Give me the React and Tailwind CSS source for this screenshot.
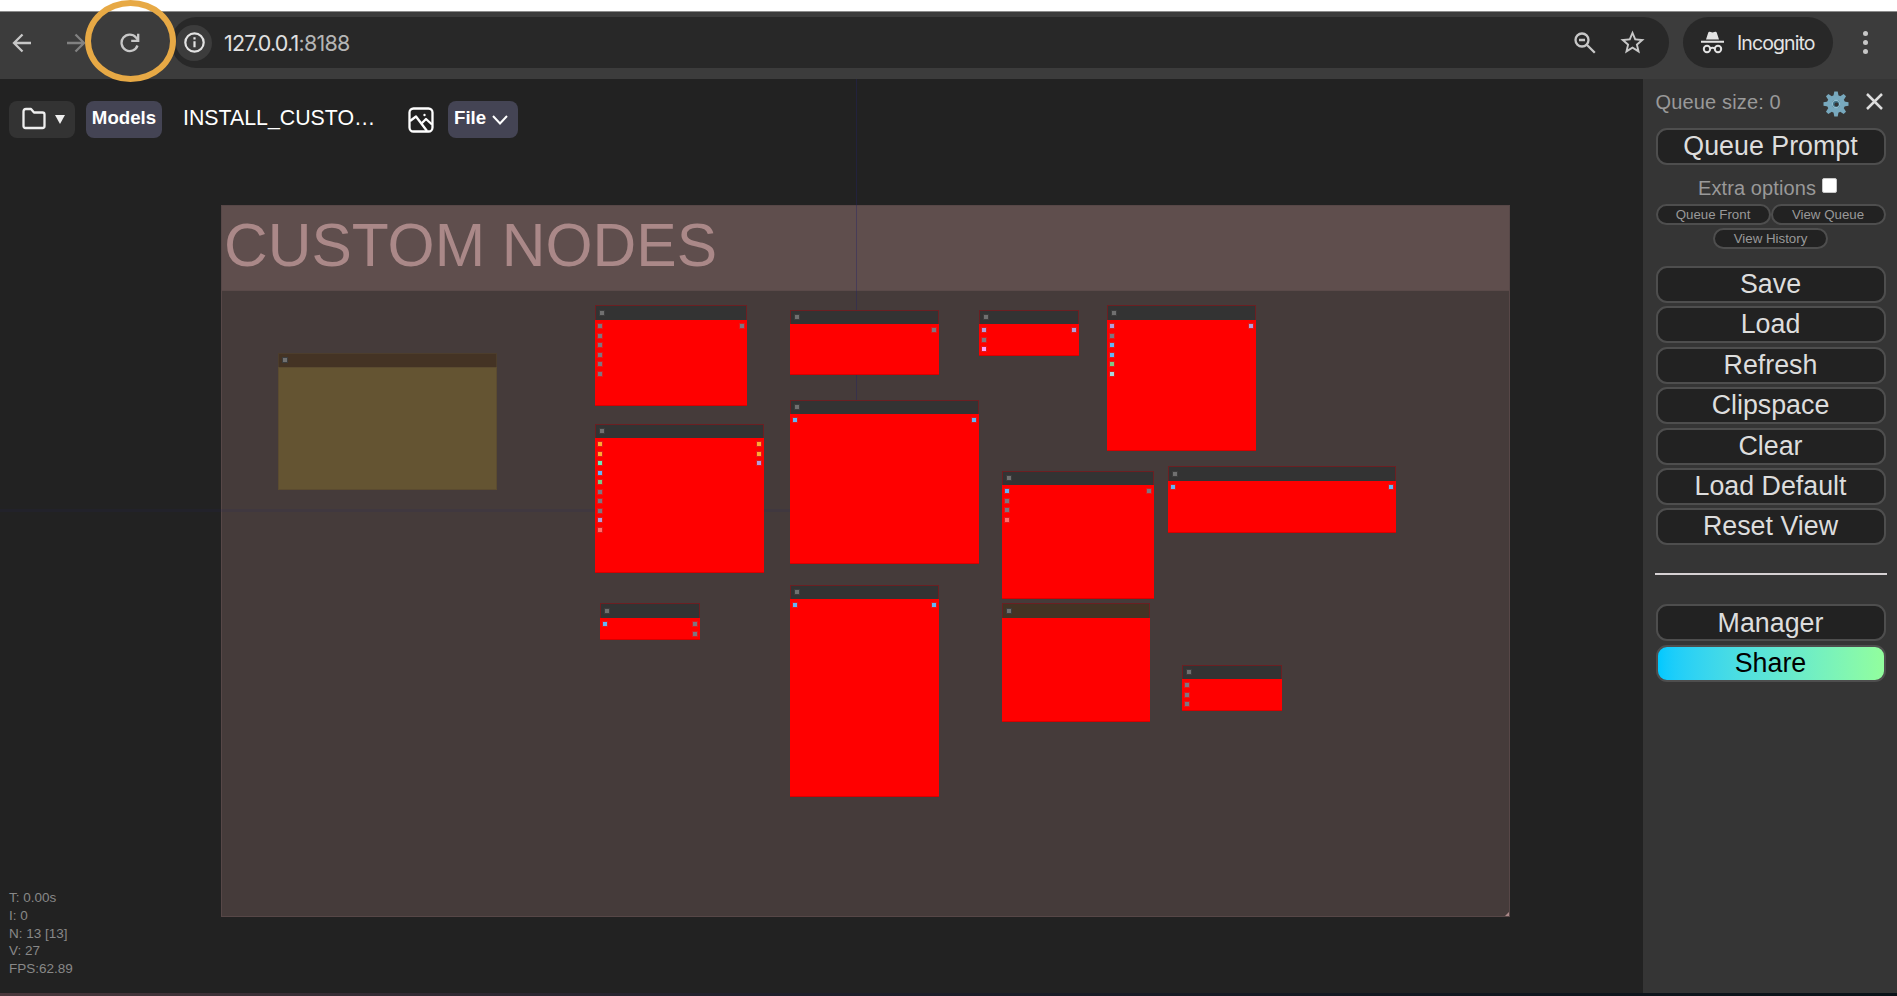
import { MdStarOutline } from "react-icons/md";

const GREY = "#7f7580";
const BLUE = "#64b5f6";
const ORANGE = "#ffa931";
const VIOLET = "#b39ddb";
const GREEN = "#81c784";
const MINT = "#6ee7b7";
const ROSE = "#ff6e6e";

// x, right edge, title top, body top, bottom (window coordinates)
const nodes = [
  { x: 278, r: 497, t: 353, b: 367, e: 490, kind: "note" },
  { x: 595, r: 747, t: 305, b: 320, e: 406, ins: [GREY, GREY, GREY, GREY, GREY, GREY], outs: [GREY] },
  { x: 595, r: 764, t: 424, b: 438, e: 573, ins: [ORANGE, ORANGE, MINT, BLUE, GREEN, GREY, GREY, GREY, VIOLET, ROSE], outs: [ORANGE, ORANGE, VIOLET] },
  { x: 600, r: 700, t: 603, b: 618, e: 640, ins: [BLUE], outs: [GREY, GREY] },
  { x: 790, r: 939, t: 310, b: 324, e: 375, outs: [GREY] },
  { x: 790, r: 979, t: 400, b: 414, e: 564, ins: [BLUE], outs: [BLUE] },
  { x: 790, r: 939, t: 585, b: 599, e: 797, ins: [BLUE], outs: [BLUE] },
  { x: 979, r: 1079, t: 310, b: 324, e: 356, ins: [VIOLET, GREY, "#ff9cf9"], outs: [VIOLET] },
  { x: 1107, r: 1256, t: 305, b: 320, e: 451, ins: [VIOLET, GREY, BLUE, BLUE, GREEN, "#a8dadc"], outs: [VIOLET] },
  { x: 1002, r: 1154, t: 471, b: 485, e: 599, ins: [BLUE, GREY, GREY, ROSE], outs: [GREY] },
  { x: 1168, r: 1396, t: 466, b: 481, e: 533, ins: [BLUE], outs: [BLUE] },
  { x: 1002, r: 1150, t: 603, b: 618, e: 722, kind: "brown" },
  { x: 1182, r: 1282, t: 665, b: 679, e: 711, ins: [GREY, GREY, GREY] },
];

const Slots = ({ colors = [] }) => (
  <div className="relative w-1">
    {colors.map((c, i) => (
      <span
        key={i}
        className="absolute left-0 size-1 outline outline-[#c83030]/60"
        style={{ top: Math.round(i * 9.5), background: c }}
      />
    ))}
  </div>
);

const Node = ({ n }) => {
  const note = n.kind === "note";
  const title = n.kind ? "bg-[#443324]" : "bg-[#333333]";
  const edge = note ? "border-[#4c3d2c]" : "border-[#6b1f22]";
  return (
    <div
      className="absolute flex flex-col"
      style={{ left: n.x, top: n.t - 79, width: n.r - n.x, height: n.e - n.t }}
    >
      <div className={`flex shrink-0 items-center border border-b-0 pb-px pl-1 ${title} ${edge}`} style={{ height: n.b - n.t }}>
        <span className="size-1 bg-[#707070] outline outline-[#3c3c3c]" />
      </div>
      <div
        className={`flex flex-1 justify-between px-[3px] pt-1 ${note ? "border border-[#5b4b30] bg-[#645432]" : "border-b border-[#d80000] bg-[#ff0000]"}`}
      >
        <Slots colors={n.ins} />
        <Slots colors={n.outs} />
      </div>
    </div>
  );
};

const MenuButton = ({ children, className = "" }) => (
  <button className={`flex h-[37px] w-[230px] shrink-0 items-center justify-center rounded-[11px] border-2 border-[#4e4e4e] bg-[#222222] text-[26.8px] leading-none text-[#dddddd] ${className}`}>
    {children}
  </button>
);

const SmallButton = ({ children }) => (
  <button className="flex h-[21px] w-[115px] items-center justify-center rounded-full border-2 border-[#4e4e4e] bg-[#222222] text-[13.3px] leading-none text-[#999999]">
    {children}
  </button>
);

const BrowserBar = () => (
  <header className="relative flex h-[68px] shrink-0 items-start border-t border-[#8c8c8c] bg-[#3c3c3c] pt-[5px]">
    <div className="flex h-[51px] w-[171px] shrink-0 items-center">
      <svg className="ml-3 size-5" viewBox="0 0 20 20" fill="none" stroke="#c7c7c7" strokeWidth="2.3">
        <path d="M19 10H2.5M10.5 1.5 2 10l8.500 8.500" />
      </svg>
      <svg className="ml-[34px] size-5" viewBox="0 0 20 20" fill="none" stroke="#818181" strokeWidth="2.3">
        <path d="M1 10h16.500M9.500 1.500 18 10l-8.500 8.500" />
      </svg>
      <svg className="ml-[34px] size-5" viewBox="0 0 20 20" fill="none" stroke="#c7c7c7" strokeWidth="2.300">
        <path d="M17.500 12.500A8.200 8.200 0 1 1 16 4.500L18 7" />
        <path d="M18.200 .8v7h-7" />
      </svg>
    </div>
    <div className="flex h-[51px] w-[1498px] shrink-0 items-center rounded-full bg-[#282828] pr-[22px] pl-[5px]">
      <span className="flex size-9 items-center justify-center rounded-full bg-[#3c3c3c]">
        <svg className="size-[21px]" viewBox="0 0 21 21" fill="none" stroke="#e3e3e3" strokeWidth="2.200">
          <circle cx="10.500" cy="10.500" r="9.200" />
          <path d="M10.500 9.300v6M10.500 5.300v2.200" />
        </svg>
      </span>
      <span className="ml-[12px] pt-[2px] font-[Inter,sans-serif] text-[21.500px] tracking-[-0.8px] text-[#e0e0e0]">
        127.0.0.1<span className="text-[#b5b5b5]">:8188</span>
      </span>
      <svg className="ml-auto size-[22px]" viewBox="0 0 22 22" fill="none" stroke="#c7c7c7" strokeWidth="2.300">
        <circle cx="8" cy="8" r="6.500" />
        <path d="m12.800 12.800 8 8M5 8h6" />
      </svg>
      <MdStarOutline className="ml-[22px] size-[29px] text-[#c7c7c7]" />
    </div>
    <div className="ml-[14px] flex h-[51px] w-[150px] shrink-0 items-center rounded-full bg-[#282828] pl-[18px]">
      <svg className="size-[23px]" viewBox="0 0 23 23" fill="#e3e3e3">
        <path d="M5 8.500 7.300 1.500Q7.700.4 8.800.7L11.500 1.500 14.200.7Q15.300.4 15.700 1.500L18 8.500ZM0 9.700h23v2.100H0Z" />
        <g fill="none" stroke="#e3e3e3" strokeWidth="2">
          <circle cx="6" cy="18" r="3.200" />
          <circle cx="17" cy="18" r="3.200" />
          <path d="M9 17.500q2.500-1.300 5 0" />
        </g>
      </svg>
      <span className="ml-[13px] pt-[2px] font-[Inter,sans-serif] text-[19.500px] tracking-[-0.9px] text-[#e3e3e3]">Incognito</span>
    </div>
    <div className="ml-[30px] flex h-[51px] flex-col items-center justify-center gap-1">
      <span className="size-[5px] rounded-full bg-[#c7c7c7]" />
      <span className="size-[5px] rounded-full bg-[#c7c7c7]" />
      <span className="size-[5px] rounded-full bg-[#c7c7c7]" />
    </div>
    <div className="absolute -top-[12px] left-[85px] z-10 h-[82px] w-[91px] rounded-[50%] border-[6.500px] border-[#e7a945]" />
  </header>
);

const Toolbar = () => (
  <div className="relative z-10 flex items-start pt-[22px] pl-[9px] text-white">
    <div className="flex h-[37px] w-[66px] items-center rounded-lg bg-[#333333] pb-px pl-[13px]">
      <svg className="size-6" viewBox="0 0 24 24" fill="none" stroke="#eeeeee" strokeWidth="2.300" strokeLinejoin="round">
        <path d="M1.500 4.500Q1.500 2 4 2H9L12 5.500H20.500Q22.500 5.500 22.500 7.500V19Q22.500 21 20.500 21H3.500Q1.500 21 1.500 19Z" />
      </svg>
      <svg className="ml-[9px] h-[9px] w-[10px]" viewBox="0 0 10 9" fill="#eeeeee"><path d="M0 0h10L5 9z" /></svg>
    </div>
    <div className="ml-[11px] flex h-[37px] w-[76px] items-center justify-center rounded-lg bg-[#444454] pb-[4px] text-[18.670px] font-bold">Models</div>
    <div className="ml-[21px] flex h-[37px] w-[197px] items-center pb-px text-[21.330px] whitespace-nowrap">INSTALL_CUSTO…</div>
    <svg className="mt-[6px] ml-[28px] size-[26px]" viewBox="0 0 26 26" fill="none" stroke="#fff" strokeWidth="2.300" strokeLinejoin="round">
      <rect x="1.500" y="1.500" width="23" height="23" rx="4" />
      <path d="m2 14 6-4.500 11 14.500M13 17l5-5 6 5.500" />
      <circle cx="16.500" cy="8" r="1.200" fill="#fff" stroke="none" />
    </svg>
    <div className="ml-[14px] flex h-[37px] w-[70px] items-center rounded-lg bg-[#444454] pb-[4px] pl-[6px] text-[18.670px] font-bold">
      File
      <svg className="mt-1 ml-[6px] h-[10px] w-4" viewBox="0 0 16 10" fill="none" stroke="#fff" strokeWidth="2"><path d="m1 1 7 7.500L15 1" /></svg>
    </div>
  </div>
);

const Canvas = () => (
  <main className="relative flex flex-1 flex-col overflow-hidden bg-[#222222]">
    <div className="absolute top-[126px] left-[221px] h-[712px] w-[1289px] border border-[#574747] bg-[#453b3a]">
      <div className="h-[85px] border-b border-[#5a4a49] bg-[#5f4e4d] pt-[5px] pl-[2px]">
        <h1 className="text-[60.500px] leading-[68px] whitespace-nowrap text-[#aa8888]">CUSTOM NODES</h1>
      </div>
      <svg className="absolute right-0 bottom-0 size-1" viewBox="0 0 4 4"><path d="M4 0v4H0z" fill="#aa8888" /></svg>
    </div>
    <div className="absolute top-0 left-[856px] h-[432px] w-px bg-[#222266]/40" />
    <div className="absolute top-[430px] left-0 h-[3px] w-[856px] bg-[#282860]/15" />
    {nodes.map((n, i) => <Node key={i} n={n} />)}
    <Toolbar />
    <div className="mt-auto mb-[15px] flex flex-col pl-[9px] text-[13.500px] leading-[17.800px] text-[#888888]">
      <span>T: 0.00s</span>
      <span>I: 0</span>
      <span>N: 13 [13]</span>
      <span>V: 27</span>
      <span>FPS:62.89</span>
    </div>
  </main>
);

const SideMenu = () => (
  <aside className="flex w-[254px] shrink-0 flex-col items-center bg-[#353535] pl-px text-[#999999]">
    <div className="flex h-[49px] w-[230px] shrink-0 items-start pt-[11px] text-[20px] leading-6">
      <span className="tracking-[0.15px]">Queue size: 0</span>
      <svg className="mt-px ml-auto size-[26px]" viewBox="-13 -13 26 26">
        <g fill="#78a9be">
          {[0, 45, 90, 135, 180, 225, 270, 315].map((a) => (
            <path key={a} transform={`rotate(${a})`} d="M-2.600-8-1.700-12.500h3.400L2.600-8z" />
          ))}
        </g>
        <circle r="6.500" fill="none" stroke="#78a9be" strokeWidth="5" />
        <circle r="4.200" fill="#8fbfd1" />
        <circle r="3" fill="#3f6f82" />
        <circle cx=".5" cy=".5" r="2" fill="#353535" />
      </svg>
      <svg className="mt-[3px] mr-[3px] ml-[17px] size-[17px]" viewBox="0 0 17 17" fill="none" stroke="#dddddd" strokeWidth="2.500"><path d="m1 1 15 15M16 1 1 16" /></svg>
    </div>
    <MenuButton>Queue Prompt</MenuButton>
    <label className="mt-[11px] flex h-[25px] items-start gap-[6px] text-[20px] leading-[24px]">
      <span className="-ml-[6px] tracking-[0.1px]">Extra options</span>
      <span className="mt-[2px] size-[15px] rounded-[2px] border border-[#c8c8c8] bg-white" />
    </label>
    <div className="mt-[3px] flex">
      <SmallButton>Queue Front</SmallButton>
      <SmallButton>View Queue</SmallButton>
    </div>
    <div className="mt-[3px] flex">
      <SmallButton>View History</SmallButton>
    </div>
    <div className="mt-[17px] flex flex-col gap-[3.400px]">
      {["Save", "Load", "Refresh", "Clipspace", "Clear", "Load Default", "Reset View"].map((l) => (
        <MenuButton key={l}>{l}</MenuButton>
      ))}
    </div>
    <hr className="mt-[28px] mb-[29px] h-[2px] w-[232px] border-0 bg-[#d6d1d3]" />
    <div className="flex flex-col gap-[4px]">
      <MenuButton className="pt-px">Manager</MenuButton>
      <MenuButton className="bg-linear-to-r from-[#00c9ff] to-[#92fe9d] !text-black">Share</MenuButton>
    </div>
  </aside>
);

export default function App() {
  return (
    <div className="flex h-[996px] w-[1897px] flex-col overflow-hidden bg-white pt-[11px] font-['Liberation_Sans',Arial,sans-serif]">
      <BrowserBar />
      <div className="flex min-h-0 flex-1">
        <Canvas />
        <SideMenu />
      </div>
      <div className="h-[3px] shrink-0 bg-linear-to-r from-[#4a383c] via-[#20202c] via-40% to-[#0a1218]" />
    </div>
  );
}
